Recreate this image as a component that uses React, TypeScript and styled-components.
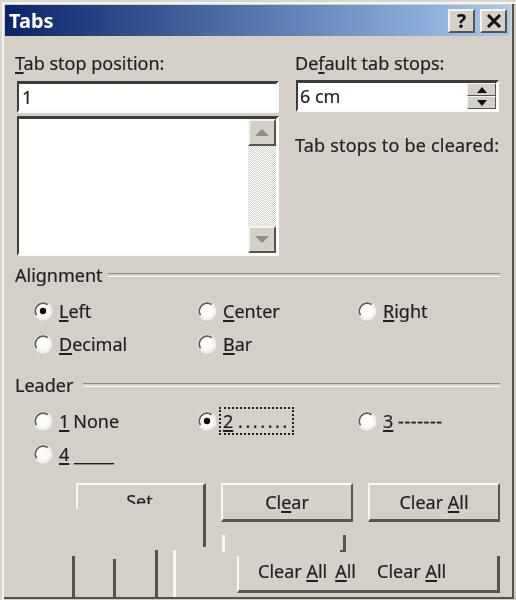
import styled, {createGlobalStyle} from 'styled-components';

const GlobalStyle = createGlobalStyle`
  html, body {
    margin: 0;
    padding: 0;
    background: #d4d0c8;
    overflow: hidden;
  }
`;

const Key = styled.span`
  text-decoration: underline;
  text-underline-offset: 2px;
  text-decoration-thickness: 2px;
`;

const Radio = ({checked}: {checked?: boolean}) => (
  <RadioIcon width="20" height="20" viewBox="0 0 20 20">
    <circle cx="10" cy="10" r="9.4" fill="#f0efeb" />
    <path d="M3.6 14.2A7.8 7.8 0 0 1 14.6 3.6" fill="none" stroke="#5f5d58" strokeWidth="2" />
    <circle cx="10" cy="10" r="6.8" fill="#fbfbfa" />
    {checked && <circle cx="10" cy="10" r="3.2" fill="#111" />}
  </RadioIcon>
);

const Option = ({checked, focus, children}: {checked?: boolean; focus?: boolean; children: React.ReactNode}) => (
  <OptionCell>
    <Radio checked={checked} />
    <OptionText $focus={focus}>{children}</OptionText>
  </OptionCell>
);

export default function App() {
  return (
    <>
      <GlobalStyle />
      <Window>
        <TitleBar>
          <TitleText>Tabs</TitleText>
          <TitleButtons>
            <TitleButton>?</TitleButton>
            <TitleButton>
              <svg width="16" height="14" viewBox="0 0 16 14">
                <path d="M2 1l12 12M14 1L2 13" stroke="#111" strokeWidth="3" />
              </svg>
            </TitleButton>
          </TitleButtons>
        </TitleBar>
        <Content>
          <TopGrid>
            <Column>
              <Label><Key>T</Key>ab stop position:</Label>
              <LeftInput readOnly value="1" />
              <ListBox>
                <ListArea />
                <ScrollBar>
                  <ScrollButton>
                    <svg width="14" height="7" viewBox="0 0 14 7"><path d="M7 0l7 7H0z" fill="#8f8c85" /></svg>
                  </ScrollButton>
                  <ScrollTrack />
                  <ScrollButton>
                    <svg width="14" height="7" viewBox="0 0 14 7"><path d="M0 0h14L7 7z" fill="#8f8c85" /></svg>
                  </ScrollButton>
                </ScrollBar>
              </ListBox>
            </Column>
            <Column>
              <Label>De<Key>f</Key>ault tab stops:</Label>
              <SpinBox>
                <SpinInput readOnly value="6 cm" />
                <SpinButtons>
                  <SpinButton>
                    <svg width="10" height="6" viewBox="0 0 10 6"><path d="M5 0l5 6H0z" fill="#111" /></svg>
                  </SpinButton>
                  <SpinButton>
                    <svg width="10" height="6" viewBox="0 0 10 6"><path d="M0 0h10L5 6z" fill="#111" /></svg>
                  </SpinButton>
                </SpinButtons>
              </SpinBox>
              <ClearedLabel>Tab stops to be cleared:</ClearedLabel>
            </Column>
          </TopGrid>

          <SectionHeader>
            <span>Alignment</span>
            <SectionLine />
          </SectionHeader>
          <OptionGrid>
            <Option checked><Key>L</Key>eft</Option>
            <Option><Key>C</Key>enter</Option>
            <Option><Key>R</Key>ight</Option>
            <Option><Key>D</Key>ecimal</Option>
            <Option><Key>B</Key>ar</Option>
          </OptionGrid>

          <LeaderHeader>
            <span>Leader</span>
            <SectionLine />
          </LeaderHeader>
          <OptionGrid>
            <Option><Key>1</Key><NarrowGap>None</NarrowGap></Option>
            <Option checked focus><Key>2</Key> <Dots>.......</Dots></Option>
            <Option><Key>3</Key> <Dashes>-------</Dashes></Option>
            <Option><Key>4</Key> _____</Option>
          </OptionGrid>

          <ButtonArea>
            <SetGhost>
              <SetText>Set</SetText>
            </SetGhost>
            <DialogButton><span>Cl<Key>e</Key>ar</span></DialogButton>
            <DialogButton><span>Clear <Key>A</Key>ll</span></DialogButton>
          </ButtonArea>

          <GhostLine $x={72} $top={556} $h={41} />
          <GhostLine $x={113} $top={559} $h={38} />
          <GhostLine $x={155} $top={550} $h={47} />
          <GhostLine $x={173} $top={550} $h={47} $light />
          <GhostLine $x={222} $top={535} $h={17} $light />
          <GhostLine $x={343} $top={535} $h={17} $foot />
          <WideButton>
            <span>Clear <Key>A</Key>ll</span>
            <AllText><Key>A</Key>ll</AllText>
            <LastText>Clear <Key>A</Key>ll</LastText>
          </WideButton>
        </Content>
      </Window>
    </>
  );
}

const Window = styled.div`
  position: relative;
  box-sizing: border-box;
  width: 516px;
  height: 600px;
  padding: 5px 6px 3px 5px;
  background: #d4d0c8;
  box-shadow:
    inset 2px 2px 0 #d9d6cf,
    inset 4px 4px 0 #f4f3f0,
    inset -2px -1px 0 #d4d0c8,
    inset -4px -3px 0 #55534e;
  font-family: 'Noto Sans', Tahoma, sans-serif;
  font-size: 18px;
  color: #1f1f24;
  -webkit-text-stroke: 0.2px #1f1f24;
  filter: blur(0.45px);
  overflow: hidden;
`;

const TitleBar = styled.div`
  display: flex;
  align-items: center;
  justify-content: space-between;
  height: 31px;
  padding: 0 3px 0 4px;
  background: linear-gradient(90deg, #0a246a, #a6caf0);
`;

const TitleText = styled.div`
  color: #fff;
  font-weight: 700;
  font-size: 20px;
  -webkit-text-stroke: 0;
`;

const TitleButtons = styled.div`
  display: flex;
  gap: 5px;
`;

const TitleButton = styled.div`
  display: flex;
  align-items: center;
  justify-content: center;
  box-sizing: border-box;
  width: 27px;
  height: 24px;
  background: #d4d0c8;
  border: 2px solid;
  border-color: #f4f3f0 #55534e #55534e #f4f3f0;
  color: #111;
  font-weight: 700;
  font-size: 19px;
`;

const Content = styled.div`
  padding: 16px 0 0 10px;
`;

const TopGrid = styled.div`
  display: grid;
  grid-template-columns: 280px 206px;
`;

const Column = styled.div`
  display: flex;
  flex-direction: column;
  align-items: flex-start;
`;

const Label = styled.div`
  height: 22px;
  line-height: 22px;
`;

const sunken = `
  box-sizing: border-box;
  border: 3px solid;
  border-color: #3d3c39 #fbfbf9 #fbfbf9 #3d3c39;
  border-left-width: 2px;
  background: #fff;
`;

const LeftInput = styled.input`
  ${sunken}
  width: 262px;
  height: 32px;
  margin: 7px 0 0 2px;
  padding: 0 0 0 3px;
  font: inherit;
  color: inherit;
  outline: none;
`;

const ListBox = styled.div`
  ${sunken}
  display: flex;
  width: 262px;
  height: 140px;
  margin: 3px 0 0 2px;
`;

const ListArea = styled.div`
  flex: 1;
`;

const ScrollBar = styled.div`
  display: flex;
  flex-direction: column;
  width: 28px;
`;

const ScrollButton = styled.div`
  display: flex;
  align-items: center;
  justify-content: center;
  box-sizing: border-box;
  height: 27px;
  background: #d4d0c8;
  border: 2px solid;
  border-color: #f4f3f0 #55534e #55534e #f4f3f0;
`;

const ScrollTrack = styled.div`
  flex: 1;
  background: repeating-conic-gradient(#d4d0c8 0 25%, #fff 0 50%) 0 0 / 2px 2px;
`;

const SpinBox = styled.div`
  ${sunken}
  display: flex;
  width: 203px;
  height: 32px;
  margin: 6px 0 0 1px;
`;

const SpinInput = styled.input`
  flex: 1;
  min-width: 0;
  border: none;
  padding: 0 0 0 2px;
  font: inherit;
  color: inherit;
  outline: none;
`;

const SpinButtons = styled.div`
  display: flex;
  flex-direction: column;
  width: 29px;
`;

const SpinButton = styled.div`
  flex: 1;
  display: flex;
  align-items: center;
  justify-content: center;
  box-sizing: border-box;
  background: #d4d0c8;
  border: 1px solid;
  border-color: #f4f3f0 #55534e #55534e #f4f3f0;
`;

const ClearedLabel = styled.div`
  margin-top: 21px;
  white-space: nowrap;
  letter-spacing: 0.2px;
`;

const SectionHeader = styled.div`
  display: flex;
  align-items: center;
  gap: 5px;
  width: 485px;
  height: 24px;
  margin-top: 7px;
`;

const LeaderHeader = styled(SectionHeader)`
  gap: 10px;
  margin-top: 13px;
`;

const SectionLine = styled.div`
  flex: 1;
  height: 2px;
  border-top: 1px solid #8b8983;
  border-bottom: 1px solid #fbfbf9;
`;

const OptionGrid = styled.div`
  display: grid;
  grid-template-columns: 164px 160px 1fr;
  grid-auto-rows: 33px;
  margin: 7px 0 0 18px;
`;

const OptionCell = styled.div`
  display: flex;
  align-items: center;
  gap: 4px;
`;

const RadioIcon = styled.svg`
  flex: none;
`;

const OptionText = styled.span<{$focus?: boolean}>`
  padding: 0 2px;
  white-space: pre;
  outline: ${p => (p.$focus ? '2px dotted #222' : 'none')};
  outline-offset: 0;
`;

const NarrowGap = styled.span`
  margin-left: 4px;
`;

const Dots = styled.span`
  letter-spacing: 2.6px;
`;

const Dashes = styled.span`
  letter-spacing: 0.6px;
`;

const ButtonArea = styled.div`
  position: relative;
  display: flex;
  justify-content: flex-end;
  gap: 15px;
  width: 485px;
  margin-top: 13px;
  height: 39px;
`;

const raised = `
  box-sizing: border-box;
  background: #d4d0c8;
  border: 2px solid;
  border-color: #f8f7f4 #55534e #55534e #f8f7f4;
  border-bottom-width: 3px;
`;

const DialogButton = styled.div`
  ${raised}
  display: flex;
  align-items: center;
  justify-content: center;
  width: 132px;
  height: 39px;
`;

const SetGhost = styled.div`
  position: absolute;
  left: 61px;
  top: 0;
  width: 127px;
  height: 62px;
  border-top: 2px solid #f8f7f4;
  border-right: 3px solid #55534e;
  &::before {
    content: '';
    position: absolute;
    left: 0;
    top: 0;
    width: 2px;
    height: 24px;
    background: #f8f7f4;
  }
`;

const SetText = styled.div`
  height: 19px;
  overflow: hidden;
  text-align: center;
  line-height: 33px;
`;

const GhostLine = styled.div<{$x: number; $top: number; $h: number; $light?: boolean; $foot?: boolean}>`
  position: absolute;
  left: ${p => p.$x}px;
  top: ${p => p.$top}px;
  width: 3px;
  height: ${p => p.$h}px;
  background: ${p => (p.$light ? '#f8f7f4' : '#55534e')};
  &::after {
    content: ${p => (p.$foot ? "''" : 'none')};
    position: absolute;
    left: -3px;
    bottom: 0;
    width: 3px;
    height: 2px;
    background: #55534e;
  }
`;

const WideButton = styled.div`
  position: absolute;
  left: 237px;
  top: 556px;
  display: flex;
  align-items: center;
  box-sizing: border-box;
  width: 263px;
  height: 37px;
  padding: 0 0 5px 19px;
  border-left: 2px solid #f8f7f4;
  border-right: 3px solid #55534e;
  border-bottom: 3px solid #55534e;
  white-space: pre;
`;

const AllText = styled.span`
  margin-left: 8px;
`;

const LastText = styled.span`
  margin-left: 21px;
`;
